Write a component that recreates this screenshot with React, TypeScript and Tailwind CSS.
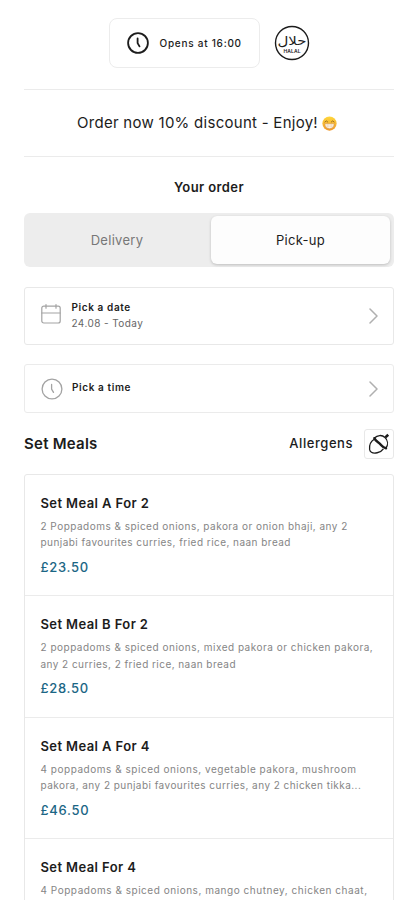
import { useState } from "react";

type Meal = {
  name: string;
  lines: { text: string; tracking: string }[];
  price?: string;
};

const meals: Meal[] = [
  {
    name: "Set Meal A For 2",
    lines: [
      { text: "2 Poppadoms & spiced onions, pakora or onion bhaji, any 2", tracking: "tracking-[0.48px]" },
      { text: "punjabi favourites curries, fried rice, naan bread", tracking: "tracking-[0.46px]" },
    ],
    price: "£23.50",
  },
  {
    name: "Set Meal B For 2",
    lines: [
      { text: "2 poppadoms & spiced onions, mixed pakora or chicken pakora,", tracking: "tracking-[0.5px]" },
      { text: "any 2 curries, 2 fried rice, naan bread", tracking: "tracking-[0.45px]" },
    ],
    price: "£28.50",
  },
  {
    name: "Set Meal A For 4",
    lines: [
      { text: "4 poppadoms & spiced onions, vegetable pakora, mushroom", tracking: "tracking-[0.53px]" },
      { text: "pakora, any 2 punjabi favourites curries, any 2 chicken tikka...", tracking: "tracking-[0.45px]" },
    ],
    price: "£46.50",
  },
  {
    name: "Set Meal For 4",
    lines: [
      { text: "4 Poppadoms & spiced onions, mango chutney, chicken chaat,", tracking: "tracking-[0.53px]" },
    ],
  },
];

function ClockIcon({ className }: { className?: string }) {
  return (
    <svg viewBox="0 0 22 22" fill="none" stroke="currentColor" className={className}>
      <circle cx="11" cy="11" r="9.9" />
      <path d="M10.6 6.5v4.6l1.9 3.3" strokeLinecap="round" strokeLinejoin="round" />
    </svg>
  );
}

function CalendarIcon() {
  return (
    <svg viewBox="0 0 20 20" fill="none" stroke="currentColor" strokeWidth="1.2" className="-mt-1 h-5 w-5 text-[#a3a3a3]">
      <rect x="0.8" y="2.2" width="18.4" height="16.8" rx="2" />
      <path d="M0.8 9h18.4M5 0.6v3.6M15 0.6v3.6" strokeLinecap="round" />
    </svg>
  );
}

function Chevron() {
  return (
    <svg viewBox="0 0 9 16" fill="none" stroke="currentColor" strokeWidth="1.5" className="mr-[15px] h-4 w-[9px] text-[#b0b0b0]">
      <path d="M1 1l7 7-7 7" strokeLinecap="round" strokeLinejoin="round" />
    </svg>
  );
}

function HalalBadge() {
  return (
    <svg viewBox="0 0 36 36" className="h-9 w-9 text-[#1c1c1c]">
      <circle cx="18" cy="18" r="16.5" fill="none" stroke="currentColor" strokeWidth="1.4" />
      <text
        x="0"
        y="0"
        textAnchor="middle"
        fontSize="12.5"
        fill="currentColor"
        transform="translate(18 20) scale(1.2 1)"
        className="font-['DejaVu_Sans',sans-serif]"
      >
        حلال
      </text>
      <text x="18" y="28" textAnchor="middle" fontSize="5" fontWeight="600" fill="currentColor" textLength="17">
        HALAL
      </text>
    </svg>
  );
}

function GrinEmoji() {
  return (
    <svg viewBox="0 0 16 16" className="h-[15px] w-[15px]">
      <defs>
        <linearGradient id="face" x1="0" y1="0" x2="0" y2="1">
          <stop offset="0" stopColor="#ffd83c" />
          <stop offset="1" stopColor="#f0982c" />
        </linearGradient>
      </defs>
      <circle cx="8" cy="8" r="7.6" fill="url(#face)" />
      <path d="M3 6.3q1.6-2.5 3.2 0M9.8 6.3q1.6-2.5 3.2 0" fill="none" stroke="#8f6420" strokeWidth="0.9" strokeLinecap="round" />
      <path d="M3 8.3h10q-.4 5.2-5 5.2t-5-5.2z" fill="#fff3e0" stroke="#c98a48" strokeWidth="0.5" />
      <path d="M3.4 10.8h9.2M6.2 8.4v4.6M9.8 8.4v4.6" stroke="#d6bfa2" strokeWidth="0.4" />
    </svg>
  );
}

function NutIcon() {
  return (
    <svg viewBox="0 0 22 22" fill="none" stroke="currentColor" className="h-[22px] w-[22px] text-[#1c1c1c]">
      <path d="M6.2 6.2C2.6 8.4 1.2 12.6 1.6 16.4c.2 1.2.8 2.2 1.8 2.8 2.4 1.6 9 1 12-3.4" strokeWidth="1.3" />
      <path d="M6.4 5C9.4 2 14 1.6 17 4.4c3 2.8 3.2 7.2 1 10.6" strokeWidth="1.3" />
      <path d="M6.4 5.2c1.4 3.2 3.4 3.6 5.6 5.6 2 2 2.6 3.8 6 4.4" strokeWidth="2.5" strokeLinecap="round" />
      <path d="M17.4 4.4l2.8-2.6" strokeWidth="2.6" />
    </svg>
  );
}

function MealRow({ meal }: { meal: Meal }) {
  return (
    <li className="h-[121.5px] border-b border-[#ebebeb] px-[15.5px] pt-[18px]">
      <h3 className="text-[13px] leading-5 font-semibold tracking-[0.4px] text-[#1c1c1c]">{meal.name}</h3>
      <div className="mt-[5px] text-[10px] leading-[16.5px] whitespace-nowrap text-[#858585]">
        {meal.lines.map((line) => (
          <p key={line.text} className={line.tracking}>{line.text}</p>
        ))}
      </div>
      {meal.price && (
        <p className="mt-[6px] text-[13px] leading-5 font-medium tracking-[0.7px] text-[#1b6685]">{meal.price}</p>
      )}
    </li>
  );
}

export default function App() {
  const [mode, setMode] = useState("Pick-up");

  return (
    <main className="h-[900px] w-[417px] overflow-hidden bg-white pr-[23px] pl-6 font-[Inter,'Liberation_Sans',sans-serif] text-[#1c1c1c]">
      <header className="flex h-[90px] items-start justify-center border-b border-[#ebebeb] pt-[18px]">
        <div className="flex h-[50px] w-[151px] items-center rounded-lg border border-[#ececec] pl-[17px]">
          <ClockIcon className="h-[22px] w-[22px] stroke-[1.8]" />
          <span className="ml-[11px] pt-px text-[10px] font-medium tracking-[0.74px] whitespace-nowrap">Opens at 16:00</span>
        </div>
        <div className="mt-[7px] ml-[14px]">
          <HalalBadge />
        </div>
      </header>

      <div className="flex h-[67px] items-center justify-center gap-1 border-b border-[#ebebeb] pr-1">
        <p className="pt-px text-[15px] tracking-[0.27px] whitespace-nowrap">Order now 10% discount - Enjoy!</p>
        <GrinEmoji />
      </div>

      <h2 className="mt-5 text-center text-[13px] leading-5 font-semibold tracking-[0.4px]">Your order</h2>

      <div className="mt-4 flex h-[54px] rounded-md bg-[#ededed] p-[3px]">
        {["Delivery", "Pick-up"].map((label) => (
          <button
            key={label}
            onClick={() => setMode(label)}
            className={
              mode === label
                ? "w-[179px] rounded-md bg-[#fdfdfd] pt-0.5 text-[13px] tracking-[0.3px] shadow-[0_1px_3px_rgba(0,0,0,0.2)]"
                : "w-[184px] pt-0.5 pr-1 text-[13px] tracking-[0.3px] text-[#777777]"
            }
          >
            {label}
          </button>
        ))}
      </div>

      <button className="mt-5 flex h-[58px] w-full items-center rounded-[3px] border border-[#e8e8e8] pl-[15.5px] text-left">
        <CalendarIcon />
        <span className="ml-[11px] flex-1 pb-0.5 text-[10px] leading-4">
          <span className="block font-semibold tracking-[0.6px]">Pick a date</span>
          <span className="block tracking-[0.42px] text-[#666666]">24.08 - Today</span>
        </span>
        <Chevron />
      </button>

      <button className="mt-[19px] flex h-[49px] w-full items-center rounded-[3px] border border-[#ebebeb] pl-4 text-left">
        <ClockIcon className="h-[22px] w-[22px] stroke-[1.3] text-[#a3a3a3]" />
        <span className="ml-[9px] flex-1 pb-0.5 text-[10px] font-semibold tracking-[0.6px]">Pick a time</span>
        <Chevron />
      </button>

      <div className="mt-4 flex h-[30px] items-center">
        <h2 className="flex-1 text-[15px] font-semibold tracking-[0.25px]">Set Meals</h2>
        <span className="mr-[11px] text-[13px] font-medium tracking-[0.55px]">Allergens</span>
        <button className="flex h-[30px] w-[30px] items-center justify-center rounded-[3px] border border-[#e8e8e8]">
          <NutIcon />
        </button>
      </div>

      <ul className="mt-[14.6px] rounded-t-[3px] border border-[#e8e8e8]">
        {meals.map((meal) => (
          <MealRow key={meal.name} meal={meal} />
        ))}
      </ul>
    </main>
  );
}
